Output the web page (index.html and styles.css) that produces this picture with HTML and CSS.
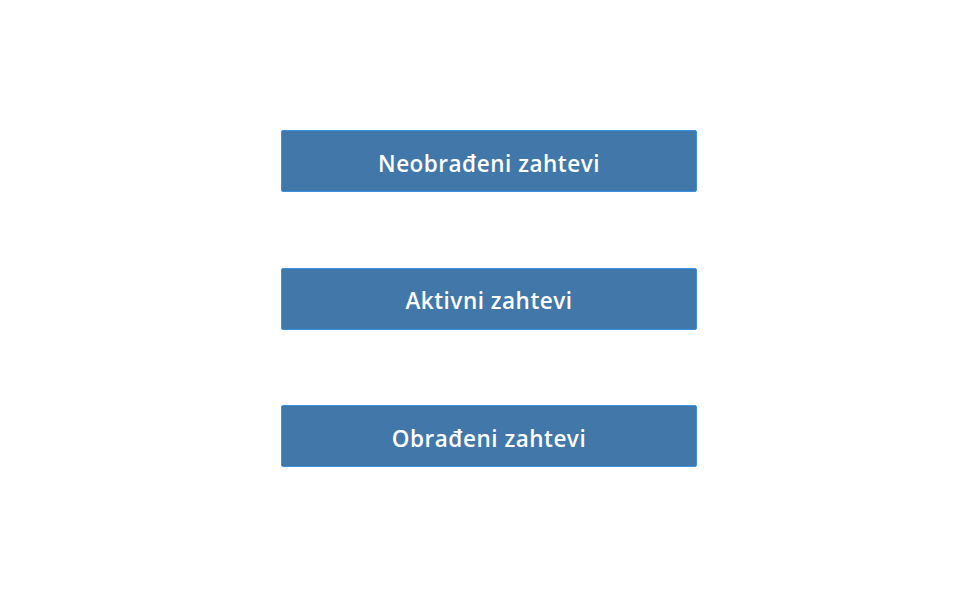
FILE: index.html
```html
<!DOCTYPE html>
<html lang="sr">
<head>
<meta charset="utf-8">
<title>Zahtevi</title>
<link rel="stylesheet" href="styles.css">
</head>
<body>
<main class="menu">
  <button class="menu-btn" type="button">Neobrađeni zahtevi</button>
  <button class="menu-btn" type="button">Aktivni zahtevi</button>
  <button class="menu-btn" type="button">Obrađeni zahtevi</button>
</main>
</body>
</html>
```
FILE: styles.css
```css
html, body {
  margin: 0;
  padding: 0;
  background: #ffffff;
}
.menu {
  display: flex;
  flex-direction: column;
  align-items: center;
  padding-top: 130px;
  padding-right: 1px;
  gap: 75.5px;
}
.menu-btn {
  box-sizing: border-box;
  width: 416px;
  height: 62px;
  margin: 0;
  padding: 4px 0 0;
  background: #4177a9;
  border: 1px solid #3a92e4;
  border-radius: 2px;
  color: #ffffff;
  font-family: "Open Sans", "Noto Sans", sans-serif;
  font-weight: 600;
  font-size: 22.5px;
  letter-spacing: 0.5px;
  cursor: pointer;
}
```
